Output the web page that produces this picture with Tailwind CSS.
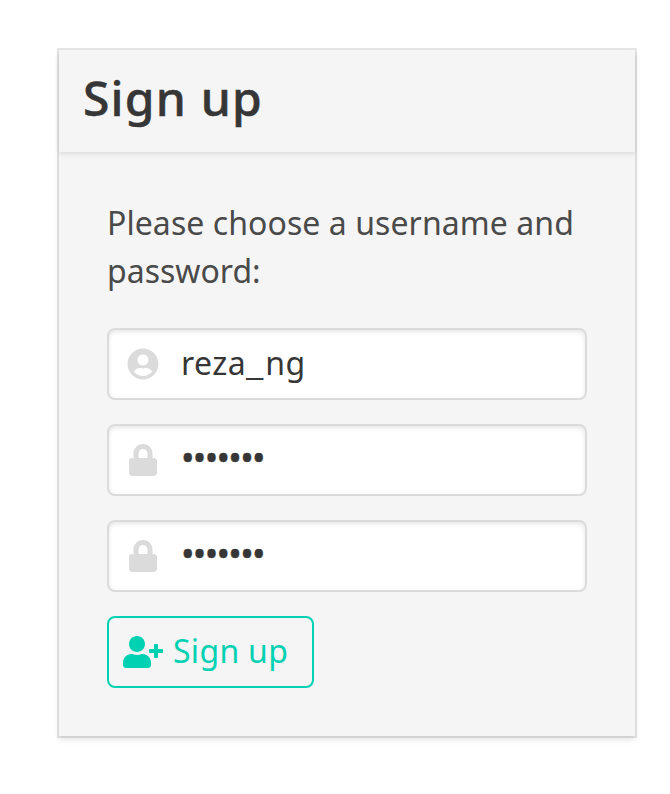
<!DOCTYPE html>
<html lang="en">
<head>
<meta charset="utf-8">
<title>Sign up</title>
<script src="https://cdn.jsdelivr.net/npm/@tailwindcss/browser@4"></script>
</head>
<body class="bg-white font-['Noto_Sans',sans-serif] text-[32px] leading-[48px] text-[#4a4a4a]">
<main class="min-h-screen pt-[50px] pl-[59px]">
  <section class="w-[576px] bg-[#f5f5f5] shadow-[0_4px_6px_rgba(10,10,10,0.1),0_0_0_2px_rgba(10,10,10,0.1)]">
    <header class="flex h-[102px] items-center px-6 pb-1.5 shadow-[0_2px_4px_rgba(10,10,10,0.1)]">
      <h1 class="whitespace-nowrap text-[48px] leading-[54px] font-medium tracking-[1.2px] text-[#363636] [-webkit-text-stroke:0.5px_#363636]">Sign up</h1>
    </header>
    <form class="px-12 pt-[47px] pb-12">
      <p class="mb-[33px] whitespace-nowrap"><span class="tracking-[0.07px]">Please choose a username and</span><br>password:</p>
      <div class="flex flex-col gap-6">
        <div class="flex h-[72px] items-center rounded-lg border-2 border-[#dbdbdb] bg-white text-[#363636] shadow-[inset_0_2px_4px_rgba(10,10,10,0.1)]">
          <span class="flex w-[68px] shrink-0 justify-center text-[#dbdbdb]">
            <svg class="h-8 w-8" viewBox="0 0 496 512" fill="currentColor"><path d="M248 8C111 8 0 119 0 256s111 248 248 248 248-111 248-248S385 8 248 8zm0 96c48.600 0 88 39.400 88 88s-39.400 88-88 88-88-39.400-88-88 39.400-88 88-88zm0 344c-58.700 0-111.300-26.600-146.500-68.200 18.800-35.400 55.600-59.800 98.500-59.800 2.400 0 4.800.4 7.100 1.100 13 4.200 26.600 6.900 40.900 6.900 14.300 0 28-2.700 40.900-6.900 2.300-.7 4.700-1.100 7.100-1.100 42.900 0 79.700 24.400 98.500 59.800C359.300 421.400 306.700 448 248 448z"/></svg>
          </span>
          <span class="pb-0.5 pl-1 tracking-[0.5px]">reza<span class="inline-block w-[19px] origin-left scale-x-[1.22]">_</span>ng</span>
        </div>
        <div class="flex h-[72px] items-center rounded-lg border-2 border-[#dbdbdb] bg-white text-[#363636] shadow-[inset_0_2px_4px_rgba(10,10,10,0.1)]">
          <span class="flex w-[68px] shrink-0 justify-center text-[#dbdbdb]">
            <svg class="h-8 w-7" viewBox="0 0 448 512" fill="currentColor"><path d="M400 224h-24v-72C376 68.200 307.800 0 224 0S72 68.200 72 152v72H48c-26.500 0-48 21.500-48 48v192c0 26.500 21.500 48 48 48h352c26.500 0 48-21.500 48-48V272c0-26.500-21.500-48-48-48zm-104 0H152v-72c0-39.700 32.300-72 72-72s72 32.300 72 72v72z"/></svg>
          </span>
          <span class="pb-[5px] pl-[4px] text-[36px] tracking-[-1.7px] [-webkit-text-stroke:0.4px_#363636]">•••••••</span>
        </div>
        <div class="flex h-[72px] items-center rounded-lg border-2 border-[#dbdbdb] bg-white text-[#363636] shadow-[inset_0_2px_4px_rgba(10,10,10,0.1)]">
          <span class="flex w-[68px] shrink-0 justify-center text-[#dbdbdb]">
            <svg class="h-8 w-7" viewBox="0 0 448 512" fill="currentColor"><path d="M400 224h-24v-72C376 68.200 307.800 0 224 0S72 68.200 72 152v72H48c-26.500 0-48 21.500-48 48v192c0 26.500 21.500 48 48 48h352c26.500 0 48-21.500 48-48V272c0-26.500-21.500-48-48-48zm-104 0H152v-72c0-39.700 32.300-72 72-72s72 32.300 72 72v72z"/></svg>
          </span>
          <span class="pb-[5px] pl-[4px] text-[36px] tracking-[-1.7px] [-webkit-text-stroke:0.4px_#363636]">•••••••</span>
        </div>
        <button type="button" class="flex h-[72px] w-[207px] items-center gap-2.5 rounded-lg border-2 border-[#00d1b2] pl-[14px] whitespace-nowrap text-[#00d1b2]">
          <svg class="h-8 w-10 shrink-0" viewBox="0 0 640 512" fill="currentColor"><path d="M624 208h-64v-64c0-8.800-7.200-16-16-16h-32c-8.800 0-16 7.200-16 16v64h-64c-8.800 0-16 7.200-16 16v32c0 8.800 7.200 16 16 16h64v64c0 8.800 7.200 16 16 16h32c8.800 0 16-7.200 16-16v-64h64c8.800 0 16-7.200 16-16v-32c0-8.800-7.200-16-16-16zm-400 48c70.700 0 128-57.300 128-128S294.700 0 224 0 96 57.300 96 128s57.300 128 128 128zm89.600 32h-16.700c-22.200 10.200-46.900 16-72.900 16s-50.600-5.800-72.900-16h-16.700C60.200 288 0 348.200 0 422.400V464c0 26.500 21.500 48 48 48h352c26.500 0 48-21.500 48-48v-41.600c0-74.200-60.200-134.400-134.400-134.400z"/></svg>
          <span class="pb-0.5 tracking-[0.3px]">Sign up</span>
        </button>
      </div>
    </form>
  </section>
</main>
</body>
</html>
